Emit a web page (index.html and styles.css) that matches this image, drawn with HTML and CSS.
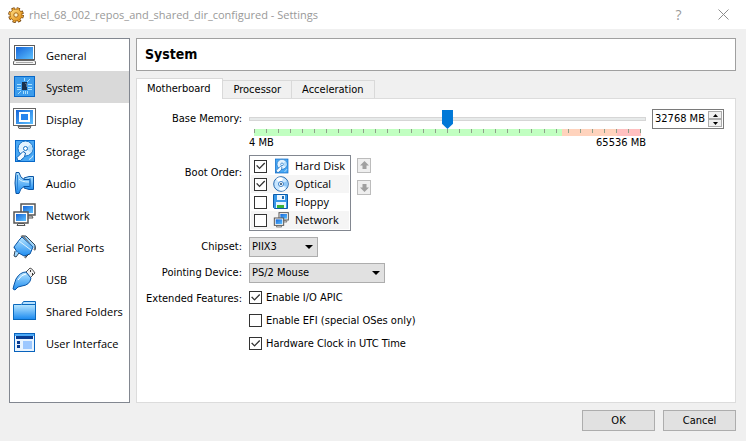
FILE: index.html
```html
<!DOCTYPE html>
<html lang="en">
<head>
<meta charset="utf-8">
<title>rhel_68_002_repos_and_shared_dir_configured - Settings</title>
<link rel="stylesheet" href="styles.css">
</head>
<body>
<svg class="defs" aria-hidden="true">
  <defs>
    <linearGradient id="blue" x1="0" y1="0" x2="1" y2="1"><stop offset="0" stop-color="#1565d8"/><stop offset="1" stop-color="#5cc0ff"/></linearGradient>
    <linearGradient id="sky" x1="0" y1="0" x2="0" y2="1"><stop offset="0" stop-color="#b4e4ff"/><stop offset="1" stop-color="#1e8cf0"/></linearGradient>
    <linearGradient id="gold" x1="0" y1="0" x2="1" y2="1"><stop offset="0" stop-color="#ffe08a"/><stop offset="1" stop-color="#e08a10"/></linearGradient>
    <symbol id="disk" viewBox="0 0 24 24">
      <rect x="3.500" y="1.500" width="19" height="21" fill="#4aa8f4" stroke="#0868c8"/>
      <circle cx="13.500" cy="9.500" r="7.500" fill="#e4f3ff" stroke="#1470c4"/>
      <path d="M13.500 9.500L19 5q3 5 0 9z" fill="#b4dcfa"/>
      <circle cx="13.500" cy="9.500" r="2" fill="#fff" stroke="#1470c4"/>
      <path d="M5 18.500l6-6 2.500 1.500-1 4-4 3.500h-3z" fill="#f4faff" stroke="#0a62b8"/>
      <path d="M17 20.500q3-1 4-4" stroke="#d0ecff" fill="none"/>
    </symbol>
    <symbol id="net" viewBox="0 0 24 24">
      <rect x="9" y="1" width="14" height="11" fill="#fff" stroke="#555" stroke-width="1.500"/>
      <rect x="11" y="3" width="10" height="7" fill="url(#blue)"/>
      <path d="M15 13h5l1 2h-5" fill="#eee" stroke="#555"/>
      <rect x="2" y="9" width="14" height="11" fill="#fff" stroke="#555" stroke-width="1.500"/>
      <rect x="4" y="11" width="10" height="7" fill="url(#blue)"/>
      <path d="M6 20.500h6l1 2H5z" fill="#eee" stroke="#555"/>
    </symbol>
  </defs>
</svg>

<header class="titlebar">
  <svg class="app-icon" viewBox="0 0 16 16" aria-hidden="true">
    <circle cx="8" cy="8" r="6.400" fill="none" stroke="#6b3c08" stroke-width="3" stroke-dasharray="3 2.020"/>
    <circle cx="8" cy="8" r="6" fill="url(#gold)" stroke="#a8660f"/>
    <circle cx="8" cy="8" r="6.400" fill="none" stroke="#f0aa35" stroke-width="1.500" stroke-dasharray="2 3.020" stroke-dashoffset="-.5"/>
    <circle cx="8" cy="8" r="2.200" fill="#fff4d0" stroke="#a8660f"/>
  </svg>
  <h1 class="title">rhel_68_002_repos_and_shared_dir_configured - Settings</h1>
  <button class="window-button" type="button" aria-label="Help">?</button>
  <button class="window-button" type="button" aria-label="Close"><svg class="close-icon" viewBox="0 0 11 11"><path d="M.5.5l10 10M10.500.5l-10 10" stroke="#8c8c8c" fill="none"/></svg></button>
</header>

<div class="content">
  <nav class="sidebar">
    <a class="item" href="#general"><svg viewBox="0 0 24 24" aria-hidden="true"><rect x="2.500" y="2.500" width="20" height="14" fill="#fff" stroke="#5c5c5c"/><rect x="4" y="4" width="17" height="12" fill="url(#blue)"/><path d="M3 17.500h19l1.500 1v3h-22v-3z" fill="#f4f4f4" stroke="#666"/><path d="M4 19.500h17" stroke="#aaa"/></svg>General</a>
    <a class="item selected" href="#system" aria-current="page"><svg viewBox="0 0 24 24" aria-hidden="true"><rect x="2.500" y="1.500" width="20" height="20" fill="#3c9cec" stroke="#0868c8"/><path d="M5 9.500h4M5 12.500h4M5 14.500h4M16 9.500h4M16 12.500h4M16 14.500h4M11.500 16v3M13.500 16v3M15.500 16v3M6 19l3-3M15 7l3-3M12.500 3v3" stroke="#a8e0ff" fill="none"/><rect x="10" y="7" width="5" height="8" fill="#18304c"/><path d="M13 8.500h1.500V12" stroke="#54708c" fill="none"/></svg>System</a>
    <a class="item" href="#display"><svg viewBox="0 0 24 24" aria-hidden="true"><rect x="1.500" y="1.500" width="22" height="17" fill="#fff" stroke="#666"/><rect x="4" y="3" width="17" height="14" fill="url(#blue)"/><rect x="8" y="6" width="9" height="8" fill="#2784ee" stroke="#fff" stroke-width="2"/><path d="M6 19.500h13l-1 2H7z" fill="#ddd" stroke="#666"/></svg>Display</a>
    <a class="item" href="#storage"><svg viewBox="0 0 24 24" aria-hidden="true"><use href="#disk"/></svg>Storage</a>
    <a class="item" href="#audio"><svg viewBox="0 0 24 24" aria-hidden="true"><path d="M12 7l5-1.500h4.500v13H17L12 17z" fill="url(#sky)" stroke="#0a55a5"/><path d="M4 1.500h3q1 5 5 7H18v7h-6q-4 2-5 7H4q-2-10.500 0-21z" fill="url(#sky)" stroke="#0a55a5"/><path d="M5.500 4v15M18 7v10" stroke="#2a84d8"/><path d="M7 8q2 3 10 3" stroke="#d8f2ff" fill="none"/></svg>Audio</a>
    <a class="item" href="#network"><svg viewBox="0 0 24 24" aria-hidden="true"><use href="#net"/></svg>Network</a>
    <a class="item" href="#serial"><svg viewBox="0 0 24 24" aria-hidden="true"><path d="M9 2l2-1 13 12-2 2M2 12l12 9-1 2" fill="none" stroke="#777" stroke-width="2"/><path d="M8 4l2-2 11 10-3 7-6 2-7-4-3-5 3-4z" fill="url(#sky)" stroke="#0a55a5"/><path d="M7 6l12 9" stroke="#dff3ff"/><path d="M12 1h2l9 9v4M14 22l3-3M3 16l-1 5 2 1 3-4" fill="#9bd6ff" stroke="#345"/></svg>Serial Ports</a>
    <a class="item" href="#usb"><svg viewBox="0 0 24 24" aria-hidden="true"><path d="M14 5l4-4q2 0 5 5l-5 5z" fill="#eee" stroke="#555"/><path d="M18 4h1M20 7h1" stroke="#333" stroke-width="2"/><path d="M4 12q4-7 10-7l5 6q-1 7-9 8l-4 1-3 3-2-1 1-4z" fill="url(#sky)" stroke="#0a55a5"/><path d="M6 13q4-6 8-6" stroke="#fff" fill="none"/></svg>USB</a>
    <a class="item" href="#folders"><svg viewBox="0 0 24 24" aria-hidden="true"><path d="M1.500 5.500h8l2-3h12v18h-22z" fill="#b9e2ff" stroke="#0a69bd"/><path d="M2 6h21v14H2z" fill="url(#sky)"/><path d="M10 5.500h13" stroke="#0a69bd"/><path d="M1 20.500h23" stroke="#0866ba"/></svg>Shared Folders</a>
    <a class="item" href="#interface"><svg viewBox="0 0 24 24" aria-hidden="true"><rect x="2.500" y="2.500" width="20" height="18" fill="#e8f4ff" stroke="#0862bc"/><path d="M3 3h19v2H3z" fill="#4ba9f7"/><path d="M4 5h17v3H4zM5 10h3v3H5zM5 14h3v3H5z" fill="#073b91"/><path d="M11 10h9v8h-9z" fill="#9cc8ff"/></svg>User Interface</a>
  </nav>

  <main class="main">
    <h2 class="heading">System</h2>
    <div class="tabs" role="tablist">
      <button class="tab active" type="button" role="tab" aria-selected="true">Motherboard</button>
      <button class="tab" type="button" role="tab" aria-selected="false">Processor</button>
      <button class="tab" type="button" role="tab" aria-selected="false">Acceleration</button>
    </div>
    <form class="panel">
      <label class="label" for="memory">Base Memory:</label>
      <div class="memory">
        <div class="memory-slider">
          <input class="slider" id="memory" type="range" min="4" max="65536" value="32768">
          <div class="scale" aria-hidden="true"><i></i><i></i><i></i><i></i><i></i><i></i><i></i><i></i><i></i><i></i><i></i><i></i><i></i><i></i><i></i><i></i><i></i><i></i><i></i><i></i><i></i><i></i><i></i><i></i><i></i><i></i><i></i><i></i><i></i><i></i><i></i><i></i><i></i></div>
          <div class="limits"><span>4 MB</span><span>65536 MB</span></div>
        </div>
        <div class="spin">
          <input class="spin-value" type="text" value="32768 MB" aria-label="Base memory size">
          <div class="spin-buttons">
            <button type="button" aria-label="Increase"><svg viewBox="0 0 5 3"><path d="M0 3L2.500 0 5 3z"/></svg></button>
            <button type="button" aria-label="Decrease"><svg viewBox="0 0 5 3"><path d="M0 0h5L2.500 3z"/></svg></button>
          </div>
        </div>
      </div>

      <span class="label boot-label">Boot Order:</span>
      <div class="boot">
        <div class="boot-list">
          <label class="boot-item"><input type="checkbox" checked><svg viewBox="0 0 24 24" aria-hidden="true"><use href="#disk"/></svg>Hard Disk</label>
          <label class="boot-item"><input type="checkbox" checked><svg viewBox="0 0 16 16" aria-hidden="true"><circle cx="8" cy="8" r="7.300" fill="#c8e6ff" stroke="#2368ae"/><path d="M8 8L3 3q3-3 7-1z" fill="#fff"/><path d="M8 8l5 5q-3 3-7 1z" fill="#f4fbff"/><path d="M8 8l6-3q1 3 0 6z" fill="#8fc8f8"/><circle cx="8" cy="8" r="2.500" fill="#fff" stroke="#3a80c8"/><circle cx="8" cy="8" r="1" fill="#246"/></svg>Optical</label>
          <label class="boot-item"><input type="checkbox"><svg viewBox="0 0 16 16" aria-hidden="true"><path d="M.5.5h14v14h-13l-1-1z" fill="#3898e8" stroke="#0b5cab"/><path d="M4 1h8v5H4z" fill="#eef7ff"/><path d="M9 2h2v3H9z" fill="#236fb4"/><path d="M3 8h10v6H3z" fill="#e8f6ff"/><path d="M4 11h7v3H4z" fill="#39b339"/></svg>Floppy</label>
          <label class="boot-item"><input type="checkbox"><svg viewBox="0 0 24 24" aria-hidden="true"><use href="#net"/></svg>Network</label>
        </div>
        <div class="boot-move">
          <button type="button" aria-label="Move up"><svg viewBox="0 0 9 9"><path d="M4.500 0L9 4.500H6.500V8h-4V4.500H0z"/></svg></button>
          <button type="button" aria-label="Move down"><svg viewBox="0 0 9 9"><path d="M4.500 9L9 4.500H6.500V1h-4v3.500H0z"/></svg></button>
        </div>
      </div>

      <label class="label" for="chipset">Chipset:</label>
      <div class="select short"><select id="chipset"><option>PIIX3</option></select></div>

      <label class="label" for="pointing">Pointing Device:</label>
      <div class="select long"><select id="pointing"><option>PS/2 Mouse</option></select></div>

      <span class="label">Extended Features:</span>
      <label class="check"><input type="checkbox" checked>Enable I/O APIC</label>
      <label class="check"><input type="checkbox">Enable EFI (special OSes only)</label>
      <label class="check"><input type="checkbox" checked>Hardware Clock in UTC Time</label>
    </form>
  </main>
</div>

<footer class="actions">
  <button class="action" type="button">OK</button>
  <button class="action" type="button">Cancel</button>
</footer>
</body>
</html>
```
FILE: styles.css
```css
* { box-sizing: border-box; }

body {
  margin: 0;
  min-height: 100vh;
  display: flex;
  flex-direction: column;
  background: #f0f0f0;
  color: #000;
  font: 11px/14px "DejaVu Sans Condensed", "DejaVu Sans", sans-serif;
}

button, input, select { font: inherit; color: inherit; margin: 0; }
button { padding: 0; }
svg { display: block; flex: none; }
.defs { position: absolute; width: 0; height: 0; }

.titlebar {
  display: flex;
  align-items: center;
  height: 29px;
  padding-left: 8px;
  background: #fff;
  color: #999;
  font-family: "Open Sans", sans-serif;
}
.app-icon { width: 16px; height: 16px; margin-right: 5px; }
.title { flex: 1; margin: 0; font-size: 11px; font-weight: 400; }
.window-button {
  display: flex;
  align-items: center;
  justify-content: center;
  width: 45px;
  height: 27px;
  border: 0;
  background: none;
  font-size: 14px;
}
.close-icon { width: 11px; height: 11px; }

.content {
  flex: 1;
  display: flex;
  gap: 6px;
  padding: 9px 10px 0 9px;
}

.sidebar {
  flex: none;
  width: 121px;
  border: 1px solid #828790;
  background: #fff;
}
.item {
  display: flex;
  align-items: center;
  gap: 10px;
  height: 32px;
  padding: 2px 0 0 2px;
  color: #000;
  font: 11px/16px "Open Sans", sans-serif;
  text-decoration: none;
  white-space: nowrap;
}
.item svg { width: 24px; height: 24px; margin-bottom: 2px; }
.selected { background: #d9d9d9; }

.main { flex: 1; display: flex; flex-direction: column; min-width: 0; }
.heading {
  margin: 0 0 7px;
  padding: 7px 8px;
  border: 1px solid #a0a0a0;
  background: #fff;
  font-size: 14px;
  line-height: 17px;
}

.tabs { display: flex; align-items: flex-end; height: 20px; }
.tab {
  height: 18px;
  padding: 0 10px;
  border: 1px solid #d9d9d9;
  border-width: 1px 1px 0 0;
  background: #f0f0f0;
}
.tab.active {
  position: relative;
  z-index: 1;
  height: 21px;
  margin-bottom: -1px;
  padding-right: 12px;
  border-left-width: 1px;
  background: #fff;
}

.panel {
  flex: 1;
  display: grid;
  grid-template-columns: 96px 1fr;
  align-content: start;
  gap: 6px 7px;
  padding: 10px 11px 10px 9px;
  border: 1px solid #dcdcdc;
  background: #fff;
}
.label { padding-top: 3px; text-align: right; white-space: nowrap; }
.boot-label { padding-top: 11px; }

.memory { display: flex; align-items: flex-start; gap: 6px; height: 40px; }
.memory-slider { flex: 1; }
.slider {
  display: block;
  appearance: none;
  width: 100%;
  height: 20px;
  background: none;
}
.slider::-webkit-slider-runnable-track {
  height: 4px;
  border: 1px solid #d6d6d6;
  background: #e7eaea;
}
.slider::-webkit-slider-thumb {
  appearance: none;
  width: 11px;
  height: 19px;
  margin-top: -8px;
  background: #0078d7;
  clip-path: polygon(0 0, 100% 0, 100% 72%, 50% 100%, 0 72%);
}
.scale {
  display: flex;
  justify-content: space-between;
  height: 7px;
  margin: 0 5px;
  background: linear-gradient(to right, #c1ffc1 79.600%, #ffd3bd 79.600% 93.700%, #ffc0c0 93.700%);
}
.scale i { width: 1px; height: 4px; background: #8fa08a; }
.limits { display: flex; justify-content: space-between; line-height: 14px; }

.spin {
  display: flex;
  width: 72px;
  height: 20px;
  padding: 1px;
  border: 1px solid #7a7a7a;
  background: #fff;
}
.spin-value { flex: 1; min-width: 0; padding: 0 0 0 1px; border: 0; background: none; }
.spin-buttons { display: flex; flex-direction: column; width: 14px; }
.spin-buttons button {
  flex: 1;
  display: flex;
  align-items: center;
  justify-content: center;
  border: 1px solid #acacac;
  background: #f0f0f0;
}
.spin-buttons svg { width: 5px; height: 3px; }

.boot { display: flex; gap: 6px; }
.boot-list { width: 102px; padding: 1px; border: 1px solid #828790; background: #fff; }
.boot-item {
  display: flex;
  align-items: center;
  height: 18px;
  padding-left: 3px;
  font: 11px/16px "Open Sans", sans-serif;
  white-space: nowrap;
}
.boot-item:nth-child(even) { background: #f5f5f5; }
.boot-item svg { width: 16px; height: 16px; margin: 0 6px; }
.boot-move { display: flex; flex-direction: column; gap: 7px; padding-top: 3px; }
.boot-move button {
  display: flex;
  align-items: center;
  justify-content: center;
  width: 14px;
  height: 15px;
  border: 1px solid #bcbcbc;
  background: #efefef;
}
.boot-move svg { width: 9px; height: 9px; fill: #a0a0a0; }

input[type="checkbox"] {
  appearance: none;
  flex: none;
  display: flex;
  width: 13px;
  height: 13px;
  border: 1px solid #333;
  background: #fff;
}
input[type="checkbox"]:checked::before {
  content: "";
  width: 11px;
  height: 11px;
  background: #333;
  clip-path: polygon(10% 48%, 20% 40%, 41% 63%, 84% 18%, 93% 27%, 41% 80%);
}

.select { position: relative; height: 20px; }
.select.short { width: 69px; }
.select.long { width: 136px; }
.select select {
  appearance: none;
  display: block;
  width: 100%;
  height: 100%;
  padding: 0 2px;
  border: 1px solid #adadad;
  border-radius: 0;
  background: #e1e1e1;
}
.select::after {
  content: "";
  position: absolute;
  top: 8px;
  right: 5px;
  border: 4px solid transparent;
  border-top-color: #000;
  border-bottom: 0;
  pointer-events: none;
}

.check {
  grid-column: 2;
  justify-self: start;
  display: flex;
  align-items: center;
  gap: 4px;
  height: 17px;
}

.actions {
  display: flex;
  justify-content: flex-end;
  gap: 8px;
  padding: 7px 10px 10px;
}
.action { width: 73px; height: 21px; border: 1px solid #adadad; background: #e1e1e1; }
```
